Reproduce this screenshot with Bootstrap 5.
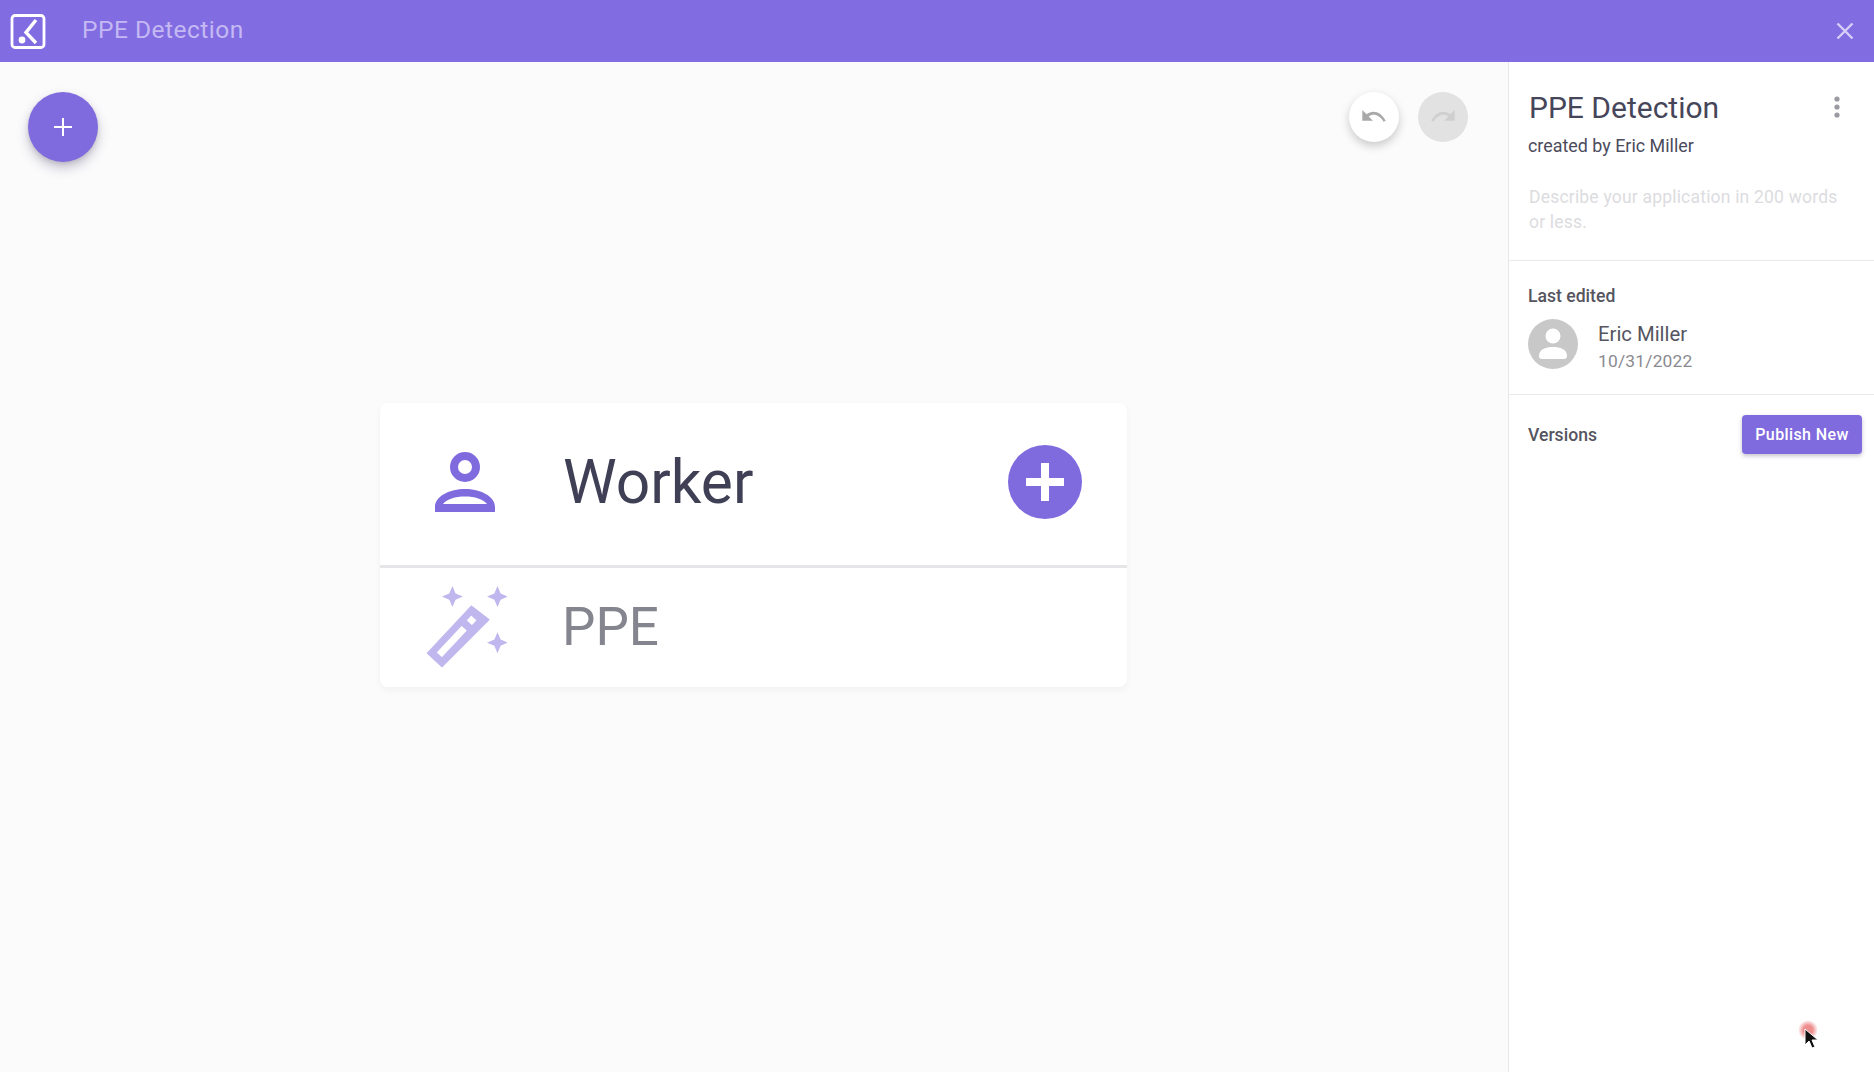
<!DOCTYPE html>
<html lang="en">
<head>
<meta charset="utf-8">
<title>PPE Detection</title>
<link href="https://cdn.jsdelivr.net/npm/bootstrap@5.3.0/dist/css/bootstrap.min.css" rel="stylesheet">
<style>
html,body{height:100%;overflow:hidden}
body{font-family:Roboto,"Liberation Sans",sans-serif;background:#fbfbfc;color:#46465a}
.app-bar{height:62px;background:#826ce2;padding:0 20px 0 10px}
.app-name{margin:0 0 2px 36px;font-size:24.500px;color:#c4b9f3;letter-spacing:.5px;line-height:1}
.app-body{height:1010px}
.canvas{padding:30px 40px 0 28px;min-width:0}
.fab{width:70px;height:70px;background:#7f6ade;box-shadow:0 6px 12px rgba(60,50,90,.28),0 2px 4px rgba(0,0,0,.1)}
.hist{width:50px;height:50px}
.hist-gap{gap:19px}
.hist-undo{background:#fff;box-shadow:0 4px 10px rgba(0,0,0,.2)}
.hist-redo{background:#e2e2e3}
.node-panel{width:747px;margin:241px 0 0 352px;border-radius:8px;background:#fff;box-shadow:0 3px 6px rgba(60,60,80,.05)}
.node-main{height:165px;padding:0 45px 4px 48px;border-bottom:3px solid #e6e6e8}
.node-sub{height:119px;padding:0 0 0 48px}
.node-ico{width:74px}
.node-title{margin:3px 0 0 61px;font-size:60.500px;line-height:1;color:#3f3f56}
.node-sub-title{font-size:53px;line-height:1;color:#85858f;margin-left:60px}
.wand{margin:0 -4px}
.node-add{width:74px;height:74px;background:#7f6ade}
.side{width:366px;background:#fff;border-left:1px solid #e7e7ea}
.sec-one{height:199px;padding:28px 20px 0 19px;border-bottom:1px solid #e9e9ec}
.sec-title{font-size:30px;line-height:36px;color:#46465a;margin-left:1px}
.by{font-size:17.900px;line-height:22px;margin-top:9px;color:#4b4b5c}
.desc{font-size:17.500px;line-height:25px;color:#dcdce0;margin:28px 0 0 1px;letter-spacing:.2px;padding-right:6px}
.sec-two{height:134px;padding:24px 20px 0 19px;border-bottom:1px solid #e9e9ec}
.lbl{font-size:17.600px;font-weight:500;color:#55555f;line-height:22px}
.pic-row{margin-top:12px}
.avatar{width:50px;height:50px;background:#c8c8c8}
.who{margin:4px 0 0 20px}
.who-name{font-size:20.300px;line-height:24px;color:#55555f;margin-top:-1px}
.who-date{font-size:17.400px;line-height:24px;color:#8a8a90;letter-spacing:.2px;margin-top:3px}
.sec-three{padding:20px 12px 0 19px}
.pub{width:120px;height:39px;padding:0;background:#7f6ade;border:0;border-radius:4px;color:#fff;font-size:16px;font-weight:500;letter-spacing:.4px;box-shadow:0 2px 4px rgba(60,50,90,.3)}
.pub:hover{background:#7f6ade;color:#fff}
.kebab{margin:0 14px 3px 0}
.pointer{position:absolute;left:1797px;top:1020px;width:24px;height:30px}
</style>
</head>
<body>
<header class="app-bar d-flex align-items-center">
  <svg width="36" height="36" viewBox="0 0 36 36" aria-hidden="true"><rect x="2" y="2.500" width="32" height="32" rx="3" fill="none" stroke="#fff" stroke-width="2.800"/><path d="M26 7 16 19.500 26 30" fill="none" stroke="#fff" stroke-width="3.400"/><circle cx="12" cy="27" r="3.400" fill="#fff"/></svg>
  <div class="app-name">PPE Detection</div>
  <svg class="ms-auto" width="18" height="18" viewBox="0 0 18 18" aria-hidden="true"><path d="M1.5 1.5 16.500 16.500M16.500 1.500 1.500 16.500" stroke="#d6cff7" stroke-width="2.400"/></svg>
</header>
<div class="app-body d-flex">
  <main class="canvas flex-grow-1">
    <div class="d-flex justify-content-between align-items-start">
      <button type="button" class="fab btn rounded-circle border-0 p-0 d-flex align-items-center justify-content-center" aria-label="Add">
        <svg width="18" height="18" viewBox="0 0 18 18" aria-hidden="true"><path d="M9 0v18M0 9h18" stroke="#fff" stroke-width="2"/></svg>
      </button>
      <div class="d-flex hist-gap">
        <div class="hist hist-undo rounded-circle d-flex align-items-center justify-content-center">
          <svg width="26" height="17" viewBox="0 0 24 16" aria-hidden="true"><path d="M1 1v10h10L7 7c4-3 10-2 14 5l2-1C19 3 11 0 5 5z" fill="#a9a9a9"/></svg>
        </div>
        <div class="hist hist-redo rounded-circle d-flex align-items-center justify-content-center">
          <svg width="26" height="17" viewBox="0 0 24 16" aria-hidden="true"><path d="M23 1v10H13l4-4C13 4 7 5 3 12l-2-1C5 3 13 0 19 5z" fill="#cfcfd0"/></svg>
        </div>
      </div>
    </div>
    <section class="node-panel">
      <div class="node-main d-flex align-items-center">
        <div class="node-ico d-flex justify-content-center">
          <svg width="62" height="62" viewBox="0 0 62 62" aria-hidden="true"><circle cx="31" cy="16" r="11" fill="none" stroke="#7f6ade" stroke-width="8"/><path fill-rule="evenodd" d="M1 61v-5C1 45 16 38 31 38s30 7 30 18v5zM9 53c4-5 12-7.500 22-7.500S49 48 53 53z" fill="#7f6ade"/></svg>
        </div>
        <div class="node-title">Worker</div>
        <div class="node-add ms-auto rounded-circle d-flex align-items-center justify-content-center">
          <svg width="38" height="38" viewBox="0 0 38 38" aria-hidden="true"><path d="M19 0v38M0 19h38" stroke="#fff" stroke-width="8"/></svg>
        </div>
      </div>
      <div class="node-sub d-flex align-items-center">
        <div class="node-ico d-flex justify-content-center">
          <svg class="wand flex-shrink-0" width="84" height="88" viewBox="0 0 80 84" aria-hidden="true"><g fill="#c0b7ee" transform="translate(0 4)"><path d="M28-2 31 5 38 8 31 11 28 18 25 11 18 8 25 5z"/><path d="M71-2 74 5 81 8 74 11 71 18 68 11 61 8 68 5z"/><path d="M71 42 74 49 81 52 74 55 71 62 68 55 61 52 68 49z"/><path fill-rule="evenodd" stroke="#c0b7ee" stroke-width="1" stroke-linejoin="round" d="M18 75 4 62 46 17l17 13zM12.400 61.400 36.800 35.300l5.600 5.200L18 66.600zM41 30.800l5-5.400 5.600 5.200-5 5.400z"/></g></svg>
        </div>
        <div class="node-sub-title">PPE</div>
      </div>
    </section>
  </main>
  <aside class="side flex-shrink-0">
    <section class="sec-one">
      <div class="d-flex justify-content-between align-items-center">
        <div class="sec-title">PPE Detection</div>
        <svg class="kebab" width="6" height="22" viewBox="0 0 6 22" aria-hidden="true"><g fill="#9a9aa0"><circle cx="3" cy="3" r="2.600"/><circle cx="3" cy="11" r="2.600"/><circle cx="3" cy="19" r="2.600"/></g></svg>
      </div>
      <div class="by">created by Eric Miller</div>
      <div class="desc">Describe your application in 200 words or less.</div>
    </section>
    <section class="sec-two">
      <div class="lbl">Last edited</div>
      <div class="d-flex pic-row">
        <div class="avatar rounded-circle d-flex align-items-center justify-content-center flex-shrink-0">
          <svg width="28" height="32" viewBox="0 0 28 32" aria-hidden="true"><circle cx="14" cy="8" r="7.500" fill="#fff"/><path d="M0 28c0-7 7-9 14-9s14 2 14 9c0 2-1 3-3 3H3c-2 0-3-1-3-3z" fill="#fff"/></svg>
        </div>
        <div class="who">
          <div class="who-name">Eric Miller</div>
          <div class="who-date">10/31/2022</div>
        </div>
      </div>
    </section>
    <section class="sec-three d-flex justify-content-between align-items-center">
      <div class="lbl">Versions</div>
      <button type="button" class="pub btn">Publish New</button>
    </section>
  </aside>
</div>
<svg class="pointer" viewBox="0 0 24 30" aria-hidden="true"><defs><radialGradient id="glow"><stop offset=".45" stop-color="#ee8d8d"/><stop offset="1" stop-color="#ee8d8d" stop-opacity="0"/></radialGradient></defs><circle cx="11" cy="10" r="10" fill="url(#glow)"/><path d="M8 9v16l4-4 3 7 3-1-3-7h6z" fill="#111" stroke="#fff" stroke-width="1"/></svg>
<script src="https://cdn.jsdelivr.net/npm/bootstrap@5.3.0/dist/js/bootstrap.bundle.min.js"></script>
</body>
</html>
